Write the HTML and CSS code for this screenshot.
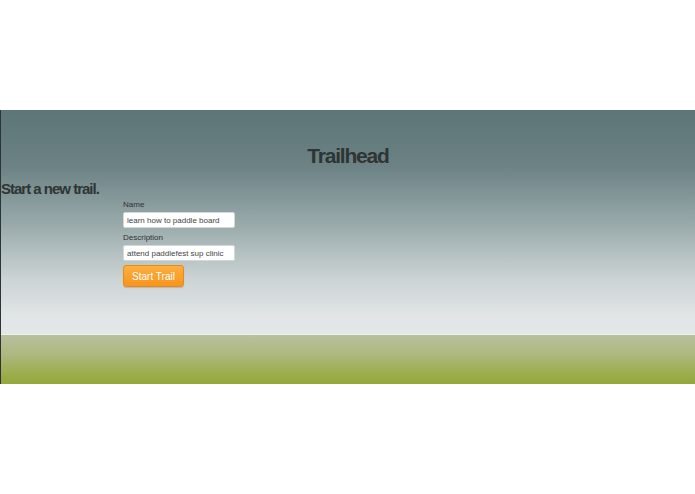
FILE: index.html
```html
<!DOCTYPE html>
<html lang="en">
<head>
  <meta charset="UTF-8" />
  <meta name="viewport" content="width=device-width, initial-scale=1.0"/>
  <title>Trailhead</title>
  <link rel="stylesheet" href="styles.css">
</head>
<body>
  <div class="spacer"></div>

  <div class="scene">
    <div class="sky">
      <h1>Trailhead</h1>
      <h2>Start a new trail.</h2>
      <form class="trail-form">
        <label for="name">Name</label>
        <input type="text" id="name" value="learn how to paddle board" />
        <label for="description">Description</label>
        <input type="text" id="description" value="attend paddlefest sup clinic" />
        <button type="submit">Start Trail</button>
      </form>
    </div>
    <div class="ground"></div>
  </div>
</body>
</html>
```

FILE: styles.css
```css
body {
  font-family: 'Liberation Sans', Arial, Helvetica, sans-serif;
  margin: 0;
  padding: 0;
  background-color: #ffffff;
  color: #333;
}
.spacer {
  height: 110px;
}
.scene {
  border-left: 1px solid #2c3535;
  display: flex;
  flex-direction: column;
}
.sky {
  height: 224px;
  background: linear-gradient(#5d7578 0%, #6c8284 25%, #97a8a9 50%, #cbd3d4 75%, #e1e5e6 92%, #e4e7e8 100%);
  border-bottom: 1px solid #eef0ef;
}
.sky h1 {
  margin: 0;
  padding-top: 34px;
  font-size: 21px;
  line-height: 24px;
  letter-spacing: -1.2px;
  text-align: center;
  color: #2f3434;
}
.sky h2 {
  margin: 12px 0 0 0;
  font-size: 15px;
  line-height: 18px;
  letter-spacing: -1px;
  color: #2f3434;
}
.trail-form {
  margin: 2px 0 0 122px;
  width: 112px;
  display: flex;
  flex-direction: column;
  align-items: flex-start;
}
.trail-form label {
  font-size: 8px;
  line-height: 10px;
  color: #2f3434;
}
.trail-form input {
  box-sizing: border-box;
  width: 112px;
  height: 16px;
  margin: 2px 0 5px 0;
  padding: 0 3px;
  border: 1px solid #d4d8d8;
  border-radius: 2px;
  background: #fff;
  font-family: 'Liberation Sans', Arial, sans-serif;
  font-size: 8px;
  color: #444;
}
.trail-form button {
  margin-top: -1px;
  width: 61px;
  height: 22px;
  border: 1px solid #e98a17;
  border-radius: 3px;
  background: linear-gradient(#fbb042, #f7941d);
  color: #fff;
  font-family: 'Liberation Sans', Arial, sans-serif;
  font-size: 10px;
  padding: 0;
  box-shadow: 0 1px 1px rgba(0,0,0,0.15);
  cursor: pointer;
}
.ground {
  height: 49px;
  background: linear-gradient(#b8c09e 0%, #adb87e 40%, #9cad4c 80%, #94a83a 100%);
}
```
